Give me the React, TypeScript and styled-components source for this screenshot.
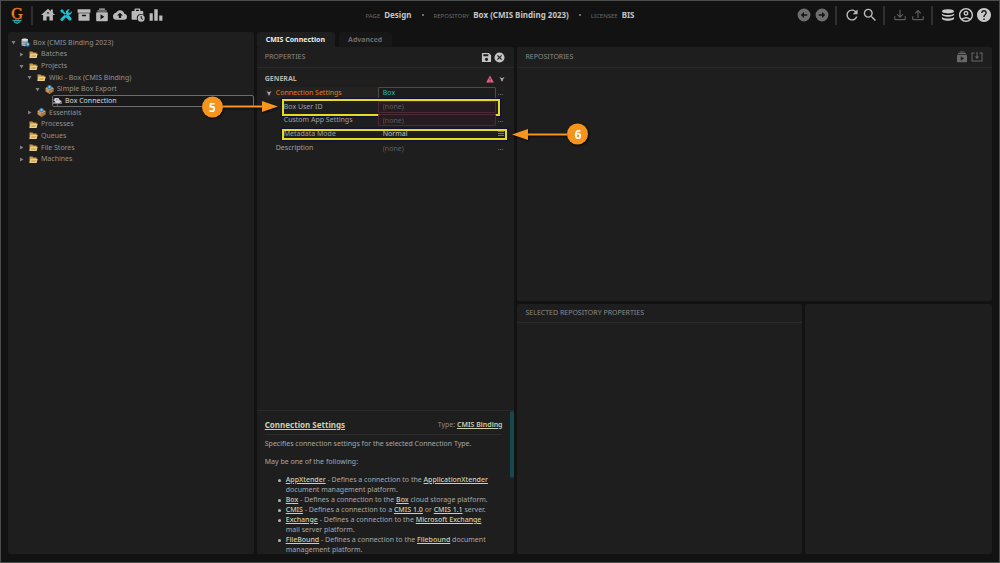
import React from 'react';
import styled, { createGlobalStyle, css } from 'styled-components';
import { MdHouse, MdHelp, MdOutlineAccountCircle } from 'react-icons/md';

const Global = createGlobalStyle`
  * { box-sizing: border-box; }
  html, body, #root { height: 100%; }
  body {
    margin: 0;
    background: #121212;
    color: #a8a8a8;
    font: 7px/10px "Noto Sans", sans-serif;
    overflow: hidden;
  }
  button { all: unset; box-sizing: border-box; cursor: pointer; }
  ul { list-style: none; margin: 0; padding: 0; }
  h1, h2, h3, p { margin: 0; font-weight: 400; font-size: inherit; }
`;

/* ---------- page frame ---------- */

const Page = styled.div`
  height: 100%;
  display: flex;
  flex-direction: column;
  border: 1px solid #4b4d4d;
`;
const TopBar = styled.header`
  height: 31px;
  display: grid;
  grid-template-columns: 1fr auto 1fr;
  align-items: center;
  padding: 0 8px 3px;
`;
const IconRow = styled.nav<{ $end?: boolean }>`
  display: flex;
  align-items: center;
  gap: 4px;
  justify-content: ${p => (p.$end ? 'flex-end' : 'flex-start')};
`;
const IconButton = styled.button<{ $tone?: string; $size?: number }>`
  display: flex;
  flex: none;
  width: ${p => p.$size ?? 14}px;
  height: ${p => p.$size ?? 14}px;
  color: ${p => p.$tone ?? '#b9b9b9'};
  svg { width: 100%; height: 100%; fill: currentColor; }
`;
const Logo = styled.svg`
  width: 16px;
  height: 18px;
  flex: none;
`;
const Divider = styled.span`
  width: 2px;
  height: 19px;
  background: #303030;
  margin: 0 4px 0 2px;
`;
const Crumbs = styled.div`
  display: flex;
  align-items: center;
  gap: 10px;
`;
const Crumb = styled.div`
  display: flex;
  align-items: baseline;
  gap: 4px;
  font-size: 6px;
  color: #6a6a6a;
  text-transform: uppercase;
  white-space: nowrap;
  strong { font-size: 8px; font-weight: 700; color: #c4c4c4; text-transform: none; }
`;
const Dot = styled.span`
  width: 2px;
  height: 2px;
  border-radius: 1px;
  background: #8a8a8a;
`;
const Main = styled.main`
  flex: 1;
  min-height: 0;
  display: grid;
  grid-template-columns: 246fr 258fr 475fr;
  column-gap: 3px;
  padding: 0 7px 8px;
`;
const Panel = styled.section`
  background: #1e1e1e;
  border-radius: 2px;
  min-width: 0;
  min-height: 0;
`;
const PanelHead = styled.div<{ $low?: boolean }>`
  height: ${p => (p.$low ? 19 : 21)}px;
  display: flex;
  align-items: center;
  justify-content: space-between;
  padding: 0 9px 0 8px;
  border-bottom: 1px solid #2a2a2a;
  color: #8a8a8a;
`;
const HeadActions = styled.div<{ $gap: number }>`
  display: flex;
  gap: ${p => p.$gap}px;
`;

/* ---------- tree ---------- */

const Tree = styled.ul`
  display: grid;
  grid-auto-rows: 1fr;
  height: 128px;
  margin-top: 5px;
`;
const TreeRow = styled.li<{ $level: number }>`
  display: flex;
  align-items: center;
  gap: 4px;
  padding-left: ${p => 3 + p.$level * 8}px;
  min-height: 0;
`;
const Caret = styled.svg`
  width: 5px;
  height: 5px;
  flex: none;
  fill: #7f7f7f;
`;
const TreeItem = styled.button<{ $selected?: boolean }>`
  flex: 1;
  display: flex;
  align-items: center;
  gap: 3px;
  height: 12px;
  white-space: nowrap;
  border: 1px solid ${p => (p.$selected ? '#6c6c6c' : 'transparent')};
  border-radius: 2px;
  color: ${p => (p.$selected ? '#dcdcdc' : '#929292')};
  background: ${p => (p.$selected ? '#191919' : 'transparent')};
  svg { width: 9px; height: 9px; flex: none; }
`;

/* ---------- property grid ---------- */

const Middle = styled.div`
  display: flex;
  flex-direction: column;
  min-width: 0;
  min-height: 0;
`;
const Tabs = styled.div`
  display: flex;
  gap: 4px;
  height: 15px;
`;
const Tab = styled.button<{ $active?: boolean }>`
  padding: 0 10px 0 9px;
  line-height: 15px;
  font-weight: 700;
  border-radius: 3px 3px 0 0;
  background: ${p => (p.$active ? '#1e1e1e' : '#171717')};
  color: ${p => (p.$active ? '#ededed' : '#6b6b6b')};
`;
const PropPanel = styled(Panel)`
  flex: 1;
  display: flex;
  flex-direction: column;
`;
const Legend = styled.div`
  display: flex;
  align-items: center;
  gap: 5px;
  height: 14px;
  margin-top: 4px;
  padding: 0 9px 0 8px;
  color: #b4b4b4;
  h3 { flex: 1; font-weight: 700; }
  svg { flex: none; }
`;
const PropList = styled.div`
  flex: 1;
  min-height: 0;
`;
const PropRows = styled.div`
  display: grid;
  grid-auto-rows: 1fr;
  height: 69px;
  margin: 0 8px;
`;
const PropRow = styled.div`
  position: relative;
  display: grid;
  grid-template-columns: 113px 118px 1fr;
  align-items: center;
  min-height: 0;
`;
const PropLabel = styled.label<{ $nested?: boolean; $active?: boolean }>`
  display: flex;
  align-items: center;
  gap: 4px;
  height: 12px;
  padding-left: ${p => (p.$nested ? 19 : p.$active ? 1 : 11)}px;
  color: ${p => (p.$active ? '#e07c1c' : '#a0a0a0')};
  background: ${p => (p.$active ? '#232221' : 'transparent')};
`;
const field = css`
  width: 100%;
  min-width: 0;
  height: 12px;
  margin: 0;
  padding: 0 4px;
  font: inherit;
  outline: none;
  border-radius: 1px;
`;
const tones = {
  value: css`border: 1px solid #4c4c4c; background: #1c1c1c; color: #25b7c0;`,
  invalid: css`border: 1px solid #4a2b35; background: #261b20; color: #5e5e5e;`,
  plain: css`border: 1px solid transparent; background: transparent; color: #5e5e5e;`,
};
const Field = styled.input<{ $tone: keyof typeof tones }>`
  ${field}
  ${p => tones[p.$tone]}
`;
const Choice = styled.select`
  ${field}
  appearance: none;
  border: 1px solid transparent;
  background: transparent;
  color: #c6c6c6;
`;
const More = styled.button`
  padding-left: 2px;
  color: #777;
  display: flex;
`;

/* ---------- callouts over the grid ---------- */

const Highlight = styled.div<{ $wide?: boolean }>`
  position: absolute;
  left: 17px;
  right: ${p => (p.$wide ? -1 : 6)}px;
  top: ${p => (p.$wide ? 2 : -1)}px;
  bottom: ${p => (p.$wide ? 1 : -2)}px;
  border: 2px solid #e6dc1c;
  box-shadow: 0 0 1px 1px #10103a;
  pointer-events: none;
`;
const Callout = styled.div<{ $side: 'left' | 'right' }>`
  position: absolute;
  top: 50%;
  transform: translateY(-50%);
  z-index: 2;
  display: flex;
  align-items: center;
  width: 76px;
  flex-direction: ${p => (p.$side === 'left' ? 'row' : 'row-reverse')};
  ${p => (p.$side === 'left' ? 'right: calc(100% - 13px);' : 'left: calc(100% + 6px);')}
  filter: drop-shadow(1px 1px 1px rgba(0, 0, 0, 0.8));
  svg {
    flex: 1;
    min-width: 0;
    height: 12px;
    fill: #f7941d;
    transform: ${p => (p.$side === 'left' ? 'none' : 'scaleX(-1)')};
  }
`;
const Badge = styled.span`
  width: 21px;
  height: 21px;
  flex: none;
  border-radius: 50%;
  background: #f7941d;
  color: #fff;
  font-size: 12px;
  line-height: 21px;
  font-weight: 700;
  text-align: center;
`;

/* ---------- help pane ---------- */

const Help = styled.article`
  position: relative;
  height: 144px;
  overflow: hidden;
  border-top: 1px solid #292929;
  padding: 4px 12px 0 8px;
`;
const HelpHead = styled.div`
  display: flex;
  justify-content: space-between;
  align-items: center;
  height: 20px;
  border-bottom: 1px solid #2c2c2c;
  margin-bottom: 4px;
  color: #8a8a8a;
`;
const HelpLink = styled.a<{ $title?: boolean }>`
  color: #cfcfae;
  font-weight: ${p => (p.$title ? 700 : 600)};
  font-size: ${p => (p.$title ? 8 : 7)}px;
`;
const HelpText = styled.p`
  margin-bottom: 8px;
`;
const HelpList = styled.ul`
  padding: 0 8px 0 21px;
  ${HelpLink} { font-weight: 500; }
  li { position: relative; }
  li::before {
    content: '';
    position: absolute;
    left: -8px;
    top: 4px;
    width: 3px;
    height: 3px;
    border-radius: 50%;
    background: #b4b4b4;
  }
`;
const ScrollThumb = styled.span`
  position: absolute;
  top: 0;
  right: 0;
  width: 4px;
  height: 67px;
  border-radius: 2px;
  background: #15494d;
`;

const Right = styled.div`
  display: grid;
  grid-template-rows: 254fr 250fr;
  grid-template-columns: 285fr 187fr;
  gap: 3px;
  padding-top: 15px;
  min-width: 0;
`;
const Wide = styled(Panel)`
  grid-column: 1 / -1;
`;

/* ---------- icons ---------- */

const paths = {
  tools:
    'M2.2 4.2 4.4 2l3 1.6.6 2.6 5 5-1.9 1.9-5-5-2.4-.6zM14 13.2l1.8-1.8 5.8 6-.1 2.2-1.8 2-2.3-.2-5.6-5.7zM16.2 2.1a5.4 5.4 0 0 1 2.4.2l-3 3.1.6 2.5 2.5.6 3.1-3.1a5.3 5.3 0 0 1-6.4 6.5L6.6 21.3a2.3 2.3 0 0 1-3.5-3.4l9.1-9.1a5.3 5.3 0 0 1 4-6.7z',
  archive: 'M1 2h22v6H1zM2.5 9h19v13h-19zM8.5 11.5V14h7v-2.500z',
  playBox:
    'M7 1h10v2H7zM4 4.200h16v2H4zM3.500 7.400h17A1.500 1.500 0 0 1 22 8.900v12.100a1.500 1.500 0 0 1-1.500 1.500h-17A1.500 1.500 0 0 1 2 21V8.900a1.500 1.500 0 0 1 1.500-1.500zM9.500 10.500v9l6.500-4.500z',
  cloud:
    'M14,13V17H10V13H7L12,8L17,13M19.35,10.03C18.67,6.59 15.64,4 12,4C9.11,4 6.6,5.64 5.35,8.03C2.34,8.36 0,10.9 0,14A6,6 0 0,0 6,20H19A5,5 0 0,0 24,15C24,12.36 21.95,10.22 19.35,10.03Z',
  briefcase:
    'M8 1h6a2 2 0 0 1 2 2v2h3.500A1.500 1.500 0 0 1 21 6.500v5.200A6.800 6.800 0 0 0 10.700 20H2.500A1.500 1.500 0 0 1 1 18.500v-12A1.500 1.500 0 0 1 2.500 5H6V3a2 2 0 0 1 2-2zM8.500 3v2h5V3zM17.500 11.500a6 6 0 1 1 0 12 6 6 0 0 1 0-12zM16.700 13.500v4.700l3.300 2 .8-1.300-2.500-1.500v-3.900z',
  bars: 'M1 9h5.500v13H1zM9 2h6v20H9zM17.500 13H23v9h-5.500z',
  back: 'M12 1a11 11 0 1 1 0 22 11 11 0 0 1 0-22zM17.500 10.600H12V7l-5.500 5 5.500 5v-3.600h5.500z',
  forward: 'M12 1a11 11 0 1 1 0 22 11 11 0 0 1 0-22zM6.500 10.600H12V7l5.500 5-5.500 5v-3.600H6.500z',
  refresh:
    'M17.65,6.35C16.2,4.9 14.21,4 12,4A8,8 0 0,0 4,12A8,8 0 0,0 12,20C15.73,20 18.84,17.45 19.73,14H17.65C16.83,16.33 14.61,18 12,18A6,6 0 0,1 6,12A6,6 0 0,1 12,6C13.66,6 15.14,6.69 16.22,7.78L13,11H20V4L17.65,6.35Z',
  search:
    'M9.5,3A6.5,6.5 0 0,1 16,9.5C16,11.11 15.41,12.59 14.44,13.73L14.71,14H15.5L20.5,19L19,20.5L14,15.5V14.71L13.73,14.44C12.59,15.41 11.11,16 9.5,16A6.5,6.5 0 0,1 3,9.5A6.5,6.5 0 0,1 9.5,3M9.5,5C7,5 5,7 5,9.5C5,12 7,14 9.5,14C12,14 14,12 14,9.5C14,7 12,5 9.5,5Z',
  download:
    'M2 14H4V19H20V14H22V19C22 20.11 21.11 21 20 21H4C2.9 21 2 20.11 2 19V14M12 17L17.55 11.54L16.13 10.13L13 13.25V3H11V13.25L7.88 10.13L6.46 11.55L12 17Z',
  upload:
    'M2 14H4V19H20V14H22V19C22 20.11 21.11 21 20 21H4C2.9 21 2 20.11 2 19V14M12 3L6.46 8.46L7.88 9.88L11 6.75V17H13V6.75L16.13 9.88L17.55 8.45L12 3Z',
  stack:
    'M12 2c6 0 10.500 1.600 10.500 3.700S18 9.400 12 9.400 1.500 7.800 1.500 5.700 6 2 12 2zM1.500 9.300C3.500 11 7.500 11.900 12 11.900s8.500-.9 10.500-2.600v1.900c0 2.100-4.500 3.800-10.500 3.800S1.500 13.300 1.500 11.200zM1.500 15.300c2 1.700 6 2.600 10.500 2.600s8.500-.9 10.500-2.600v2.400c0 2.300-4.500 4.300-10.500 4.300S1.500 20 1.500 17.700z',
  save: 'M17 2H4a2 2 0 0 0-2 2v16a2 2 0 0 0 2 2h16a2 2 0 0 0 2-2V7zM5 5h11v4.500H5zM12 12.500a3.500 3.500 0 1 1 0 7 3.500 3.500 0 0 1 0-7z',
  close:
    'M12 1a11 11 0 1 1 0 22 11 11 0 0 1 0-22zM15.600 6.600 12 10.200 8.400 6.600 6.600 8.400l3.600 3.600-3.600 3.600 1.800 1.800 3.600-3.600 3.600 3.600 1.800-1.800-3.600-3.600 3.600-3.600z',
  importBox:
    'M1 3h6v2H3v14h18V5h-4V3h6v18H1zM11 2h2v9h3.500L12 16 7.500 11H11z',
};

const Glyph = ({ name, tight }: { name: keyof typeof paths; tight?: boolean }) => (
  <svg viewBox={tight ? '2 2 20 20' : '0 0 24 24'} aria-hidden="true">
    <path fillRule="evenodd" d={paths[name]} />
  </svg>
);

const Chevron = () => (
  <svg width="6" height="6" viewBox="0 0 12 12" fill="#b0b0b0" aria-hidden="true">
    <path d="M1 2l5 2.500L11 2 7.500 8v2.500h-3V8z" />
  </svg>
);

const Warning = () => (
  <svg width="8" height="8" viewBox="0 0 16 16" aria-hidden="true">
    <path fill="#ee6184" d="M8 1l7.500 14H.5z" />
    <path fill="#5e1f30" d="M7.200 6h1.600v4.500H7.200zM7.200 11.700h1.600v1.600H7.200z" />
  </svg>
);

const TreeIcon = ({ kind }: { kind: string }) => {
  if (kind === 'root')
    return (
      <svg viewBox="0 0 18 18" aria-hidden="true">
        <path fill="#a9b4bb" d="M1 3c0-3 13-3 13 0v11c0 3-13 3-13 0z" />
        <ellipse cx="7.500" cy="3.500" rx="6" ry="2" fill="#dfe5e8" />
        <path fill="none" stroke="#6c7980" d="M1 7c1 2 12 2 13 0M1 11c1 2 12 2 13 0" />
        <circle cx="13" cy="13" r="4.500" fill="#2f7fb5" />
        <path fill="#9fd0ea" d="M10.500 12l3-2 2.500 2-2 3z" />
      </svg>
    );
  if (kind === 'package')
    return (
      <svg viewBox="0 0 18 18" aria-hidden="true">
        <path fill="#b9854a" d="M1 6l8-4 8 4v7l-8 5-8-5z" />
        <path fill="#94652f" d="M9 10l8-4v7l-8 5z" />
        <path fill="#e0b070" d="M1 6l3-1 5 4-1 2zM17 6l-3-1-5 4 1 2z" />
        <circle cx="9" cy="4.500" r="4.500" fill="#3d87b8" />
        <path fill="#9ccbe4" d="M6 4l3-2 3 2-3 2z" />
        <path stroke="#e0b070" strokeWidth="1.500" d="M3 11l4 2M11 13l4-2" />
      </svg>
    );
  if (kind === 'link')
    return (
      <svg viewBox="0 0 18 18" aria-hidden="true">
        <path fill="#d5cfdb" d="M3 2h8l2 4 4 2v2h-3l-1 1h5v2H0v-2h5L4 9 1 7V5h2z" />
        <path fill="#5f5869" d="M6 5h3v1.500H6z" />
        <circle cx="9" cy="16" r="1.500" fill="#2fae3f" />
      </svg>
    );
  return (
    <svg viewBox="0 0 18 18" aria-hidden="true">
      <path fill="#c99a45" d="M1 3h6l1.500 2H15v11H1z" />
      <path fill="#ecd08a" d="M3 7.500h14.500L15 16H1z" />
      <path fill="#b98d3e" d="M5 10h9l-.3 1H4.700zM4.300 13h9l-.3 1H4z" />
    </svg>
  );
};

/* ---------- data ---------- */

type Node = { label: string; level: number; kind: string; caret?: 'open' | 'closed'; selected?: boolean };

const nodes: Node[] = [
  { label: 'Box (CMIS Binding 2023)', level: 0, kind: 'root', caret: 'open' },
  { label: 'Batches', level: 1, kind: 'folder', caret: 'closed' },
  { label: 'Projects', level: 1, kind: 'folder', caret: 'open' },
  { label: 'Wiki - Box (CMIS Binding)', level: 2, kind: 'folder', caret: 'open' },
  { label: 'Simple Box Export', level: 3, kind: 'package', caret: 'open' },
  { label: 'Box Connection', level: 4, kind: 'link', selected: true },
  { label: 'Essentials', level: 2, kind: 'package', caret: 'closed' },
  { label: 'Processes', level: 1, kind: 'folder' },
  { label: 'Queues', level: 1, kind: 'folder' },
  { label: 'File Stores', level: 1, kind: 'folder', caret: 'closed' },
  { label: 'Machines', level: 1, kind: 'folder', caret: 'closed' },
];

const Arrow = () => (
  <svg viewBox="0 0 55 12" preserveAspectRatio="none" aria-hidden="true">
    <path d="M0 5h39V0.500L55 6 39 11.500V7H0z" />
  </svg>
);

const Ellipsis = ({ label }: { label: string }) => <More aria-label={label}>...</More>;

export default function App() {
  return (
    <>
      <Global />
      <Page>
        <TopBar>
          <IconRow aria-label="Pages">
            <Logo viewBox="0 0 32 36" aria-hidden="true">
              <defs>
                <linearGradient id="flame" x1="0" y1="0" x2="0" y2="1">
                  <stop offset="0" stopColor="#d8401c" />
                  <stop offset="0.500" stopColor="#f09a28" />
                  <stop offset="1" stopColor="#e0401c" />
                </linearGradient>
              </defs>
              <text
                x="16"
                y="25"
                textAnchor="middle"
                fontFamily="Liberation Serif, serif"
                fontSize="32"
                fill="url(#flame)"
                stroke="url(#flame)"
                strokeWidth="1"
              >
                G
              </text>
              <path fill="none" stroke="#1fb5b5" strokeWidth="2.500" d="M7 28l4 2 2.500-2 2.500 2 2.500-2 2.500 2 4-2M10 31.500l6 3 6-3" />
            </Logo>
            <Divider />
            <IconButton aria-label="Home"><MdHouse viewBox="2 2 20 20" /></IconButton>
            <IconButton aria-label="Design" $tone="#1cc3d6"><Glyph name="tools" /></IconButton>
            <IconButton aria-label="Batches"><Glyph name="archive" /></IconButton>
            <IconButton aria-label="Tasks"><Glyph name="playBox" /></IconButton>
            <IconButton aria-label="Imports"><Glyph name="cloud" /></IconButton>
            <IconButton aria-label="Jobs"><Glyph name="briefcase" /></IconButton>
            <IconButton aria-label="Stats"><Glyph name="bars" /></IconButton>
          </IconRow>
          <Crumbs>
            <Crumb>Page <strong>Design</strong></Crumb>
            <Dot />
            <Crumb>Repository <strong>Box (CMIS Binding 2023)</strong></Crumb>
            <Dot />
            <Crumb>Licensee <strong>BIS</strong></Crumb>
          </Crumbs>
          <IconRow $end aria-label="Commands">
            <IconButton aria-label="Back" $tone="#6d6d6d"><Glyph name="back" /></IconButton>
            <IconButton aria-label="Forward" $tone="#6d6d6d"><Glyph name="forward" /></IconButton>
            <Divider />
            <IconButton aria-label="Refresh"><Glyph name="refresh" tight /></IconButton>
            <IconButton aria-label="Search"><Glyph name="search" tight /></IconButton>
            <Divider />
            <IconButton aria-label="Download" $tone="#5e5e5e"><Glyph name="download" /></IconButton>
            <IconButton aria-label="Upload" $tone="#5e5e5e"><Glyph name="upload" /></IconButton>
            <Divider />
            <IconButton aria-label="Repository" $tone="#c8c8c8"><Glyph name="stack" /></IconButton>
            <IconButton aria-label="Account" $tone="#c8c8c8"><MdOutlineAccountCircle viewBox="2 2 20 20" /></IconButton>
            <IconButton aria-label="Help" $tone="#c8c8c8"><MdHelp viewBox="2 2 20 20" /></IconButton>
          </IconRow>
        </TopBar>

        <Main>
          <Panel>
            <Tree>
              {nodes.map(n => (
                <TreeRow key={n.label} $level={n.level}>
                  <Caret viewBox="0 0 10 10" aria-hidden="true">
                    {n.caret && <path d={n.caret === 'open' ? 'M1 2h8L5 9z' : 'M2 1l7 4-7 4z'} />}
                  </Caret>
                  <TreeItem $selected={n.selected}>
                    <TreeIcon kind={n.kind} />
                    {n.label}
                  </TreeItem>
                </TreeRow>
              ))}
            </Tree>
          </Panel>

          <Middle>
            <Tabs>
              <Tab $active>CMIS Connection</Tab>
              <Tab>Advanced</Tab>
            </Tabs>
            <PropPanel>
              <PanelHead>
                <h2>PROPERTIES</h2>
                <HeadActions $gap={2}>
                  <IconButton $size={11} aria-label="Save" $tone="#c4c4c4"><Glyph name="save" /></IconButton>
                  <IconButton $size={11} aria-label="Cancel" $tone="#c4c4c4"><Glyph name="close" /></IconButton>
                </HeadActions>
              </PanelHead>
              <PropList>
                <Legend>
                  <h3>GENERAL</h3>
                  <Warning />
                  <Chevron />
                </Legend>
                <PropRows>
                  <PropRow>
                    <PropLabel $active htmlFor="conn"><Chevron />Connection Settings</PropLabel>
                    <Field id="conn" $tone="value" defaultValue="Box" />
                    <Ellipsis label="Edit connection" />
                  </PropRow>
                  <PropRow>
                    <PropLabel $nested htmlFor="user">Box User ID</PropLabel>
                    <Field id="user" $tone="invalid" defaultValue="(none)" />
                    <Highlight />
                    <Callout $side="left"><Badge>5</Badge><Arrow /></Callout>
                  </PropRow>
                  <PropRow>
                    <PropLabel $nested htmlFor="custom">Custom App Settings</PropLabel>
                    <Field id="custom" $tone="invalid" defaultValue="(none)" />
                    <Ellipsis label="Edit app settings" />
                  </PropRow>
                  <PropRow>
                    <PropLabel $nested htmlFor="meta">Metadata Mode</PropLabel>
                    <Choice id="meta"><option>Normal</option></Choice>
                    <More aria-label="Choose mode">
                      <svg width="6" height="6" viewBox="0 0 6 6" fill="#777"><path d="M0 0h6v1H0zM0 2h6v1H0zM0 4h6v1H0z" /></svg>
                    </More>
                    <Highlight $wide />
                    <Callout $side="right"><Badge>6</Badge><Arrow /></Callout>
                  </PropRow>
                  <PropRow>
                    <PropLabel htmlFor="desc">Description</PropLabel>
                    <Field id="desc" $tone="plain" defaultValue="(none)" />
                    <Ellipsis label="Edit description" />
                  </PropRow>
                </PropRows>
              </PropList>
              <Help>
                <HelpHead>
                  <HelpLink $title href="#settings">Connection Settings</HelpLink>
                  <span>Type: <HelpLink href="#binding">CMIS Binding</HelpLink></span>
                </HelpHead>
                <HelpText>Specifies connection settings for the selected Connection Type.</HelpText>
                <HelpText>May be one of the following:</HelpText>
                <HelpList>
                  <li><HelpLink href="#ax">AppXtender</HelpLink> - Defines a connection to the <HelpLink href="#ax">ApplicationXtender</HelpLink> document management platform.</li>
                  <li><HelpLink href="#box">Box</HelpLink> - Defines a connection to the <HelpLink href="#box">Box</HelpLink> cloud storage platform.</li>
                  <li><HelpLink href="#cmis">CMIS</HelpLink> - Defines a connection to a <HelpLink href="#cmis10">CMIS 1.0</HelpLink> or <HelpLink href="#cmis11">CMIS 1.1</HelpLink> server.</li>
                  <li><HelpLink href="#ex">Exchange</HelpLink> - Defines a connection to the <HelpLink href="#ex">Microsoft Exchange</HelpLink> mail server platform.</li>
                  <li><HelpLink href="#fb">FileBound</HelpLink> - Defines a connection to the <HelpLink href="#fb">Filebound</HelpLink> document management platform.</li>
                </HelpList>
                <ScrollThumb />
              </Help>
            </PropPanel>
          </Middle>

          <Right>
            <Wide>
              <PanelHead>
                <h2>REPOSITORIES</h2>
                <HeadActions $gap={3}>
                  <IconButton $size={12} aria-label="Run" $tone="#686868"><Glyph name="playBox" /></IconButton>
                  <IconButton $size={12} aria-label="Import" $tone="#686868"><Glyph name="importBox" /></IconButton>
                </HeadActions>
              </PanelHead>
            </Wide>
            <Panel>
              <PanelHead $low><h2>SELECTED REPOSITORY PROPERTIES</h2></PanelHead>
            </Panel>
            <Panel />
          </Right>
        </Main>
      </Page>
    </>
  );
}
